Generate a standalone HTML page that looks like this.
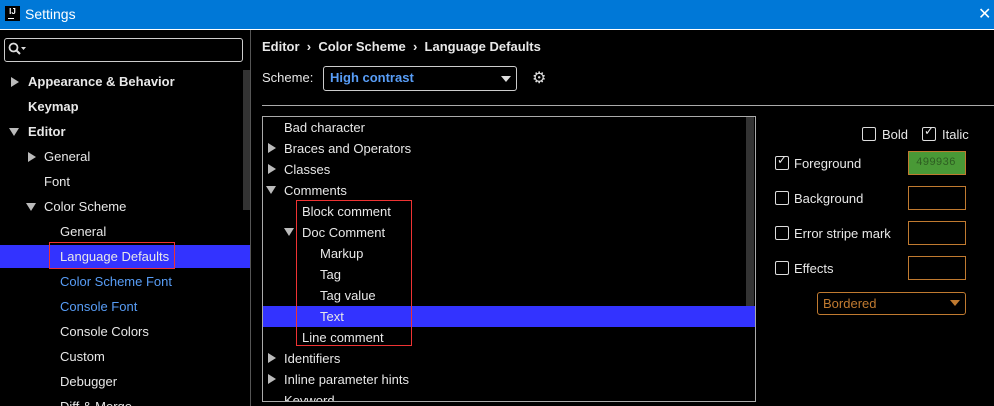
<!DOCTYPE html><html><head><style>
html,body{margin:0;width:994px;height:406px;overflow:hidden}
body{background:#000;font-family:"Liberation Sans",sans-serif;font-size:13px;color:#e8e8e8;position:relative}
.a{position:absolute;white-space:nowrap}
.tb{position:absolute;left:0;top:0;width:994px;height:29px;background:#0078d7;border-bottom:1px solid #fff}
.tri{position:absolute;width:0;height:0}
.r{border-top:5px solid transparent;border-bottom:5px solid transparent;border-left:8px solid #bbb}
.d{border-left:5px solid transparent;border-right:5px solid transparent;border-top:8px solid #bbb}
.b{font-weight:bold}
.bl{color:#589df6}
.cb{position:absolute;width:12px;height:12px;border:1px solid #ddd;border-radius:2px}
.sw{position:absolute;left:908px;width:56px;height:22px;border:1px solid #c07a30}
</style></head><body>
<div class="tb"></div>
<div class="a" style="left:5px;top:6px;width:15px;height:15px;background:#000;color:#fff;font-size:8px;font-weight:bold;line-height:11px;text-align:center">IJ<div style="position:absolute;left:3px;top:12px;width:6px;height:1px;background:#fff"></div></div>
<div class="a" style="left:25px;top:6px;color:#fff;font-size:14px">Settings</div>
<div class="a" style="left:978px;top:4px;color:#fff;font-size:16px">✕</div>
<!-- left -->
<div class="a" style="left:4px;top:38px;width:237px;height:22px;border:1px solid #ccc;border-radius:3px"></div>
<svg class="a" style="left:8px;top:42px" width="20" height="14"><circle cx="5.5" cy="5.5" r="4" fill="none" stroke="#ddd" stroke-width="1.8"/><line x1="8.5" y1="8.5" x2="12" y2="12" stroke="#ddd" stroke-width="2"/><path d="M13 5h5l-2.5 3z" fill="#ddd"/></svg>
<div class="a" style="left:243px;top:70px;width:7px;height:140px;background:#333"></div>
<div class="a" style="left:250px;top:30px;width:1px;height:376px;background:#555"></div>
<div class="a" style="left:0;top:245px;width:250px;height:23px;background:#3333ff"></div>
<div class="a" style="left:49px;top:242px;width:126px;height:27px;border:1px solid #e33;box-sizing:border-box"></div>
<div class="tri r" style="left:11px;top:77px"></div>
<div class="a b" style="left:28px;top:74px">Appearance &amp; Behavior</div>
<div class="a b" style="left:28px;top:99px">Keymap</div>
<div class="tri d" style="left:9px;top:128px"></div>
<div class="a b" style="left:28px;top:124px">Editor</div>
<div class="tri r" style="left:28px;top:152px"></div>
<div class="a" style="left:44px;top:149px">General</div>
<div class="a" style="left:44px;top:174px">Font</div>
<div class="tri d" style="left:26px;top:203px"></div>
<div class="a" style="left:44px;top:199px">Color Scheme</div>
<div class="a" style="left:60px;top:224px">General</div>
<div class="a" style="left:60px;top:249px">Language Defaults</div>
<div class="a bl" style="left:60px;top:274px">Color Scheme Font</div>
<div class="a bl" style="left:60px;top:299px">Console Font</div>
<div class="a" style="left:60px;top:324px">Console Colors</div>
<div class="a" style="left:60px;top:349px">Custom</div>
<div class="a" style="left:60px;top:374px">Debugger</div>
<div class="a" style="left:60px;top:399px">Diff &amp; Merge</div>
<!-- right -->
<div class="a b" style="left:262px;top:39px">Editor&nbsp;&nbsp;›&nbsp;&nbsp;Color Scheme&nbsp;&nbsp;›&nbsp;&nbsp;Language Defaults</div>
<div class="a" style="left:262px;top:70px">Scheme:</div>
<div class="a" style="left:323px;top:66px;width:192px;height:23px;border:1px solid #ccc;border-radius:3px"></div>
<div class="a b bl" style="left:330px;top:70px">High contrast</div>
<div class="tri d" style="left:501px;top:76px;border-top-width:6px;border-top-color:#ddd"></div>
<div class="a" style="left:532px;top:68px;font-size:16px;color:#ddd">⚙</div>
<div class="a" style="left:262px;top:105px;width:732px;height:1px;background:#aaa"></div>
<div class="a" style="left:262px;top:116px;width:492px;height:284px;border:1px solid #aaa;overflow:hidden">
<div class="a" style="left:0;top:189px;width:492px;height:21px;background:#3333ff"></div>
<div class="a" style="left:483px;top:0;width:8px;height:189px;background:#333"></div>
<div class="a" style="left:21px;top:276px">Keyword</div>
</div>
<div class="a" style="left:296px;top:200px;width:116px;height:146px;border:1px solid #e33;box-sizing:border-box"></div>
<div class="a" style="left:284px;top:120px">Bad character</div>
<div class="tri r" style="left:268px;top:143px"></div><div class="a" style="left:284px;top:141px">Braces and Operators</div>
<div class="tri r" style="left:268px;top:164px"></div><div class="a" style="left:284px;top:162px">Classes</div>
<div class="tri d" style="left:266px;top:186px"></div><div class="a" style="left:284px;top:183px">Comments</div>
<div class="a" style="left:302px;top:204px">Block comment</div>
<div class="tri d" style="left:284px;top:228px"></div><div class="a" style="left:302px;top:225px">Doc Comment</div>
<div class="a" style="left:320px;top:246px">Markup</div>
<div class="a" style="left:320px;top:267px">Tag</div>
<div class="a" style="left:320px;top:288px">Tag value</div>
<div class="a" style="left:320px;top:309px">Text</div>
<div class="a" style="left:302px;top:330px">Line comment</div>
<div class="tri r" style="left:268px;top:353px"></div><div class="a" style="left:284px;top:351px">Identifiers</div>
<div class="tri r" style="left:268px;top:374px"></div><div class="a" style="left:284px;top:372px">Inline parameter hints</div>
<div class="cb" style="left:862px;top:127px"></div><div class="a" style="left:882px;top:127px">Bold</div>
<div class="cb" style="left:922px;top:127px"></div><div class="a" style="left:924px;top:124px;font-size:12px">✓</div><div class="a" style="left:942px;top:127px">Italic</div>
<div class="cb" style="left:775px;top:156px"></div><div class="a" style="left:777px;top:153px;font-size:12px">✓</div><div class="a" style="left:794px;top:156px">Foreground</div>
<div class="sw" style="top:151px;background:#499936"></div><div class="a" style="left:916px;top:157px;font-family:'Liberation Mono',monospace;font-size:11px;color:#2e5e22">499936</div>
<div class="cb" style="left:775px;top:191px"></div><div class="a" style="left:794px;top:191px">Background</div><div class="sw" style="top:186px"></div>
<div class="cb" style="left:775px;top:226px"></div><div class="a" style="left:794px;top:226px">Error stripe mark</div><div class="sw" style="top:221px"></div>
<div class="cb" style="left:775px;top:261px"></div><div class="a" style="left:794px;top:261px">Effects</div><div class="sw" style="top:256px"></div>
<div class="a" style="left:817px;top:292px;width:147px;height:21px;border:1px solid #c07a30;border-radius:3px"></div>
<div class="a" style="left:823px;top:296px;color:#c07a30">Bordered</div>
<div class="tri d" style="left:950px;top:300px;border-top-width:6px;border-top-color:#c07a30"></div>
</body></html>
